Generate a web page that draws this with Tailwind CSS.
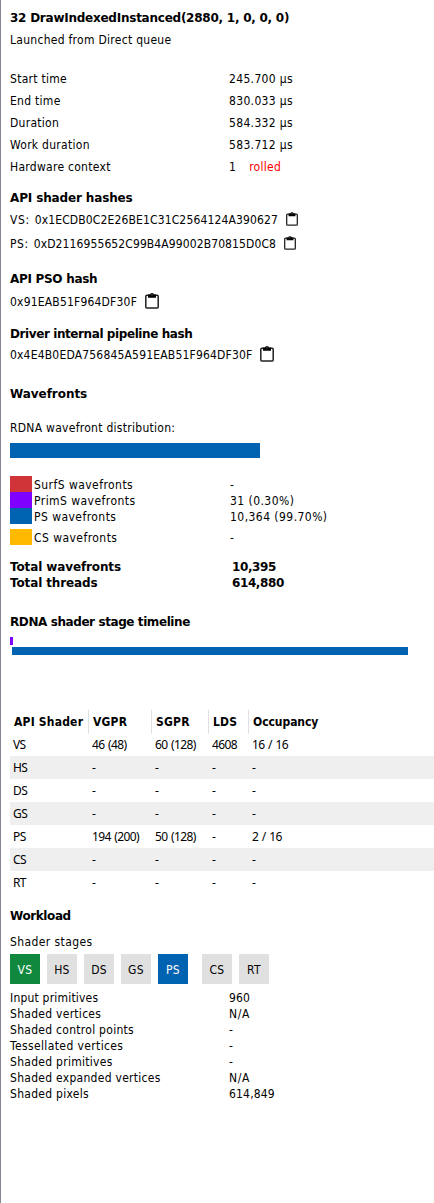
<!DOCTYPE html>
<html lang="en">
<head>
<meta charset="utf-8">
<title>Event details</title>
<script src="https://cdn.jsdelivr.net/npm/@tailwindcss/browser@4"></script>
</head>
<body class="bg-white">
<svg class="hidden">
  <symbol id="clip" viewBox="0 0 14 16">
    <rect x=".8" y="2.200" width="12.400" height="12.900" rx="1" fill="none" stroke="#222" stroke-width="1.500"/>
    <path fill="#000" d="M3 1.500H5Q5.200 0 7 0T9 1.500H11V4.800H3Z"/>
    <circle cx="7" cy="1.800" r=".6" fill="#999"/>
  </symbol>
</svg>
<main class="h-[1203px] w-[434px] overflow-hidden border-l border-[#828790] pl-[9px] pt-[7px] font-['DejaVu_Sans_Condensed','DejaVu_Sans',sans-serif] text-[12px] leading-[22px] tracking-[0.28px] whitespace-nowrap text-black">
  <h1 class="font-['DejaVu_Sans',sans-serif] font-bold tracking-[-0.245px]">32 DrawIndexedInstanced(2880, 1, 0, 0, 0)</h1>
  <p>Launched from Direct queue</p>

  <dl class="mt-[17px] grid grid-cols-[219px_1fr]">
    <dt>Start time</dt><dd class="tracking-[0.34px]">245.700 µs</dd>
    <dt>End time</dt><dd class="tracking-[0.34px]">830.033 µs</dd>
    <dt>Duration</dt><dd class="tracking-[0.34px]">584.332 µs</dd>
    <dt>Work duration</dt><dd class="tracking-[0.34px]">583.712 µs</dd>
    <dt>Hardware context</dt><dd class="flex gap-[13px]"><span>1</span><span class="text-[#ff0000]">rolled</span></dd>
  </dl>

  <h2 class="mt-[9px] font-['DejaVu_Sans',sans-serif] font-bold tracking-[-0.14px]">API shader hashes</h2>
  <div class="flex gap-2"><span class="flex w-[268px] tracking-[0.14px]"><span class="w-[25px] tracking-[0.6px]">VS:</span>0x1ECDB0C2E26BE1C31C2564124A390627</span><svg class="mt-[3px] h-[14px] w-[12px]"><use href="#clip"/></svg></div>
  <div class="mt-[2px] flex gap-2"><span class="flex w-[266px] tracking-[0.1px]"><span class="w-[24px] tracking-[0.6px]">PS:</span>0xD2116955652C99B4A99002B70815D0C8</span><svg class="mt-[3px] h-[14px] w-[12px]"><use href="#clip"/></svg></div>

  <h2 class="mt-[13px] font-['DejaVu_Sans',sans-serif] font-bold tracking-[-0.3px]">API PSO hash</h2>
  <div class="mt-px flex gap-2"><span class="w-[127px] tracking-[0.19px]">0x91EAB51F964DF30F</span><svg class="mt-[2px] h-[16px] w-[14px]"><use href="#clip"/></svg></div>

  <h2 class="mt-[10px] font-['DejaVu_Sans',sans-serif] font-bold tracking-[-0.41px]">Driver internal pipeline hash</h2>
  <div class="-mt-px flex gap-2"><span class="w-[242px] tracking-[0.185px]">0x4E4B0EDA756845A591EAB51F964DF30F</span><svg class="mt-[2px] h-[16px] w-[14px]"><use href="#clip"/></svg></div>

  <h2 class="mt-[17px] font-['DejaVu_Sans',sans-serif] font-bold tracking-[-0.05px]">Wavefronts</h2>
  <p class="mt-3">RDNA wavefront distribution:</p>
  <div class="mt-1 h-[15px] w-[250px] bg-[#0063b1]"></div>

  <div class="mt-[18px] leading-[18px] tracking-[0.45px]">
    <div class="flex h-4"><i class="mr-0.5 w-[22px] bg-[#d13438]"></i><span class="w-[196px]">SurfS wavefronts</span><span>-</span></div>
    <div class="flex h-4"><i class="mr-0.5 w-[22px] bg-[#8000ff]"></i><span class="w-[196px]">PrimS wavefronts</span><span>31 (0.30%)</span></div>
    <div class="flex h-4"><i class="mr-0.5 w-[22px] bg-[#0063b1]"></i><span class="w-[196px]">PS wavefronts</span><span>10,364 (99.70%)</span></div>
    <div class="mt-[5px] flex h-4"><i class="mr-0.5 w-[22px] bg-[#ffb900]"></i><span class="w-[196px]">CS wavefronts</span><span>-</span></div>
  </div>

  <div class="mt-[14px] grid grid-cols-[222px_1fr] font-['DejaVu_Sans',sans-serif] font-bold leading-4 tracking-[-0.12px]">
    <span>Total wavefronts</span><span class="tracking-[-0.4px]">10,395</span>
    <span>Total threads</span><span class="tracking-[-0.4px]">614,880</span>
  </div>

  <h2 class="mt-[23px] font-['DejaVu_Sans',sans-serif] font-bold leading-4 tracking-[-0.41px]">RDNA shader stage timeline</h2>
  <div class="mt-[7px] h-2 w-[3px] bg-[#8000ff]"></div>
  <div class="ml-0.5 mt-0.5 h-2 w-[396px] bg-[#0063b1]"></div>

  <div class="mt-[55px] leading-[23px]">
    <div class="grid h-[23px] grid-cols-[79px_63px_57px_40px_1fr] font-bold leading-6 tracking-[0.2px] *:border-r *:border-[#e0e0e0] *:pl-1">
      <span>API Shader</span><span>VGPR</span><span>SGPR</span><span>LDS</span><span class="border-0! tracking-[-0.05px]">Occupancy</span>
    </div>
    <div class="font-['Noto_Sans',sans-serif] tracking-[-0.6px] [word-spacing:1px] *:grid *:h-[23px] *:grid-cols-[79px_63px_57px_40px_1fr] *:pl-[3px] *:even:bg-[#efefef]">
      <div><span>VS</span><span>46 (48)</span><span>60 (128)</span><span>4608</span><span>16 / 16</span></div>
      <div><span>HS</span><span>-</span><span>-</span><span>-</span><span>-</span></div>
      <div><span>DS</span><span>-</span><span>-</span><span>-</span><span>-</span></div>
      <div><span>GS</span><span>-</span><span>-</span><span>-</span><span>-</span></div>
      <div><span>PS</span><span>194 (200)</span><span>50 (128)</span><span>-</span><span>2 / 16</span></div>
      <div><span>CS</span><span>-</span><span>-</span><span>-</span><span>-</span></div>
      <div><span>RT</span><span>-</span><span>-</span><span>-</span><span>-</span></div>
    </div>
  </div>

  <h2 class="mt-[14px] font-['DejaVu_Sans',sans-serif] font-bold leading-4 tracking-[-0.4px]">Workload</h2>
  <p class="mt-[10px] leading-4 tracking-[0.4px]">Shader stages</p>
  <div class="mt-1 flex gap-[7px] pl-0 text-center leading-8 *:h-[30px] *:w-[30px]">
    <span class="bg-[#10893e] text-white">VS</span>
    <span class="bg-[#e0e0e0]">HS</span>
    <span class="bg-[#e0e0e0]">DS</span>
    <span class="bg-[#e0e0e0]">GS</span>
    <span class="bg-[#0063b1] text-white">PS</span>
    <span class="ml-[7px] bg-[#e0e0e0]">CS</span>
    <span class="bg-[#e0e0e0]">RT</span>
  </div>

  <dl class="mt-[6px] grid grid-cols-[219px_1fr] leading-4">
    <dt class="tracking-[0.2px]">Input primitives</dt><dd class="tracking-[0.1px]">960</dd>
    <dt>Shaded vertices</dt><dd class="tracking-[0.7px]">N/A</dd>
    <dt>Shaded control points</dt><dd>-</dd>
    <dt class="tracking-[0.38px]">Tessellated vertices</dt><dd>-</dd>
    <dt>Shaded primitives</dt><dd>-</dd>
    <dt>Shaded expanded vertices</dt><dd class="tracking-[0.7px]">N/A</dd>
    <dt>Shaded pixels</dt><dd class="tracking-[0.18px]">614,849</dd>
  </dl>
</main>
</body>
</html>
